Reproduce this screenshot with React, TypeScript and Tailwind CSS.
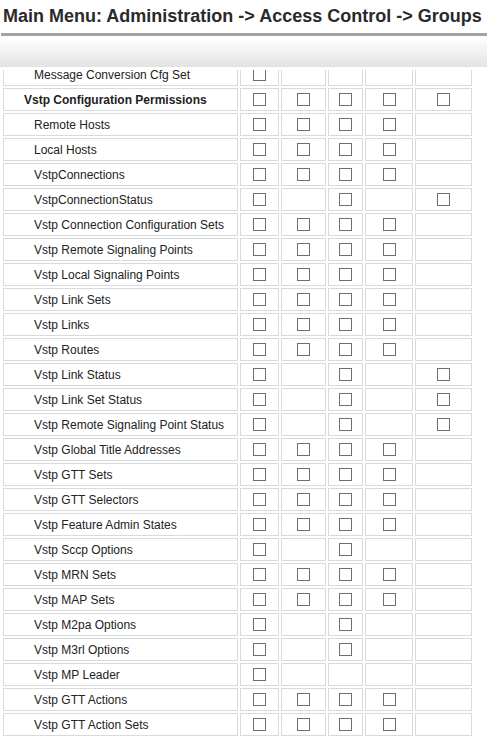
import React from "react";

type Row = { label: string; bold?: boolean; c: number[] };

const rows: Row[] = [
  { label: "Message Conversion Cfg Set", c: [1, 0, 0, 0, 0] },
  { label: "Vstp Configuration Permissions", bold: true, c: [1, 1, 1, 1, 1] },
  { label: "Remote Hosts", c: [1, 1, 1, 1, 0] },
  { label: "Local Hosts", c: [1, 1, 1, 1, 0] },
  { label: "VstpConnections", c: [1, 1, 1, 1, 0] },
  { label: "VstpConnectionStatus", c: [1, 0, 1, 0, 1] },
  { label: "Vstp Connection Configuration Sets", c: [1, 1, 1, 1, 0] },
  { label: "Vstp Remote Signaling Points", c: [1, 1, 1, 1, 0] },
  { label: "Vstp Local Signaling Points", c: [1, 1, 1, 1, 0] },
  { label: "Vstp Link Sets", c: [1, 1, 1, 1, 0] },
  { label: "Vstp Links", c: [1, 1, 1, 1, 0] },
  { label: "Vstp Routes", c: [1, 1, 1, 1, 0] },
  { label: "Vstp Link Status", c: [1, 0, 1, 0, 1] },
  { label: "Vstp Link Set Status", c: [1, 0, 1, 0, 1] },
  { label: "Vstp Remote Signaling Point Status", c: [1, 0, 1, 0, 1] },
  { label: "Vstp Global Title Addresses", c: [1, 1, 1, 1, 0] },
  { label: "Vstp GTT Sets", c: [1, 1, 1, 1, 0] },
  { label: "Vstp GTT Selectors", c: [1, 1, 1, 1, 0] },
  { label: "Vstp Feature Admin States", c: [1, 1, 1, 1, 0] },
  { label: "Vstp Sccp Options", c: [1, 0, 1, 0, 0] },
  { label: "Vstp MRN Sets", c: [1, 1, 1, 1, 0] },
  { label: "Vstp MAP Sets", c: [1, 1, 1, 1, 0] },
  { label: "Vstp M2pa Options", c: [1, 0, 1, 0, 0] },
  { label: "Vstp M3rl Options", c: [1, 0, 1, 0, 0] },
  { label: "Vstp MP Leader", c: [1, 0, 0, 0, 0] },
  { label: "Vstp GTT Actions", c: [1, 1, 1, 1, 0] },
  { label: "Vstp GTT Action Sets", c: [1, 1, 1, 1, 0] },
];

function Box() {
  return <div className="w-[13px] h-[13px] border border-[#6f6f6f] bg-white" />;
}

export default function App() {
  return (
    <div
      className="w-[487px] h-[740px] bg-white overflow-hidden flex flex-col"
      style={{ fontFamily: '"Liberation Sans", Arial, sans-serif' }}
    >
      <div className="h-[33px] pl-[3px] pt-[4px] text-[18px] leading-[24px] font-bold text-[#2a2a2a] whitespace-nowrap">
        Main Menu: Administration -&gt; Access Control -&gt; Groups
      </div>
      <div className="h-[3px] ml-[1px] bg-[#a3a3a3]" />
      <div className="h-[5px]" />
      <div className="h-[26px] bg-gradient-to-b from-[#fbfbfb] to-[#e3e3e3]" />
      <div className="h-[3px]" />
      <div className="flex-1 overflow-hidden">
        <div className="mt-[-7px] pl-[3px] grid grid-cols-[235px_39px_45px_35px_48px_57px] gap-[2px] auto-rows-[23px]">
          {rows.map((r, i) => (
            <React.Fragment key={i}>
              <div
                className={
                  "border border-[#d6dbdd] flex items-center text-[12px] text-[#222] whitespace-nowrap " +
                  (r.bold ? "pl-[20px] font-bold" : "pl-[30px]")
                }
              >
                {r.label}
              </div>
              {r.c.map((v, j) => (
                <div key={j} className="border border-[#d6dbdd] flex items-center justify-center">
                  {v ? <Box /> : null}
                </div>
              ))}
            </React.Fragment>
          ))}
        </div>
      </div>
    </div>
  );
}
